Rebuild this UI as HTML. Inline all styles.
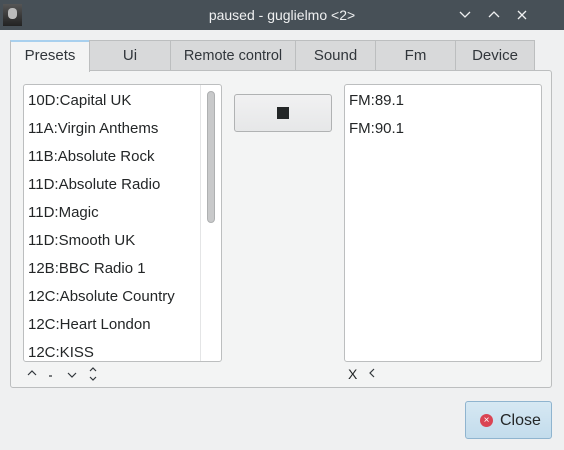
<!DOCTYPE html><html><head><style>
body{margin:0;width:564px;height:450px;background:#eff0f1;font-family:"Liberation Sans","DejaVu Sans",sans-serif;font-size:14px;color:#232627;position:relative;overflow:hidden}
.a{position:absolute}
.tb{left:0;top:0;width:564px;height:30px;background:#475057;color:#eff0f1;font-size:14px}
.tab{top:40px;height:30px;background:#d8d9da;border:1px solid #bcbebf;border-bottom:none;box-sizing:border-box;text-align:center;line-height:30px;font-size:15px;color:#31363b}
.list{background:#fff;border:1px solid #bcbebf;border-radius:3px;box-sizing:border-box}
.row{position:absolute;left:4px;font-size:15px}
</style></head><body>
<div class="a tb">
<div class="a" style="left:3px;top:4px;width:19px;height:22px;background:linear-gradient(#555,#222)"><div class="a" style="left:5px;top:4px;width:9px;height:11px;border-radius:4px;background:#bbb"></div></div>
<div class="a" style="left:0;width:564px;top:7px;text-align:center">paused - guglielmo &lt;2&gt;</div>
<svg class="a" style="left:455px;top:8px" width="100" height="14" fill="none" stroke="#eff0f1" stroke-width="1.3"><path d="M5 4l5 5 5-5M34 9l5-5 5 5M63 3l8 8M71 3l-8 8"/></svg>
</div>
<div class="a" style="left:10px;top:70px;width:542px;height:318px;background:#f3f4f4;border:1px solid #bcbebf;border-radius:3px;box-sizing:border-box"></div>
<div class="a tab" style="left:10px;width:80px;background:#f3f4f4;border-top:2px solid #a8d0ee;height:32px;line-height:28px">Presets</div>
<div class="a tab" style="left:89px;width:82px">Ui</div>
<div class="a tab" style="left:170px;width:126px;font-size:14.5px">Remote control</div>
<div class="a tab" style="left:295px;width:81px">Sound</div>
<div class="a tab" style="left:375px;width:81px">Fm</div>
<div class="a tab" style="left:455px;width:80px">Device</div>
<div class="a list" style="left:23px;top:84px;width:199px;height:278px;overflow:hidden">
<div class="a" style="left:176px;top:0;width:1px;height:278px;background:#e4e5e6"></div>
<div class="a" style="left:183px;top:6px;width:8px;height:132px;border-radius:4px;background:#c8c9ca;border:1px solid #aeb0b1;box-sizing:border-box"></div>
<div class="row" style="top:7px">10D:Capital UK</div>
<div class="row" style="top:35px">11A:Virgin Anthems</div>
<div class="row" style="top:63px">11B:Absolute Rock</div>
<div class="row" style="top:91px">11D:Absolute Radio</div>
<div class="row" style="top:119px">11D:Magic</div>
<div class="row" style="top:147px">11D:Smooth UK</div>
<div class="row" style="top:175px">12B:BBC Radio 1</div>
<div class="row" style="top:203px">12C:Absolute Country</div>
<div class="row" style="top:231px">12C:Heart London</div>
<div class="row" style="top:259px">12C:KISS</div>
</div>
<svg class="a" style="left:24px;top:366px" width="80" height="16" fill="none" stroke="#31363b" stroke-width="1.2"><path d="M4 9l4-4 4 4M25 10h3M44 7l4 4 4-4M66 5l3-3 3 3M66 11l3 3 3-3"/></svg>
<div class="a" style="left:234px;top:94px;width:98px;height:38px;border:1px solid #b0b2b3;border-radius:3px;box-sizing:border-box;background:linear-gradient(#f1f1f2,#e6e7e8)"><div class="a" style="left:42px;top:12px;width:12px;height:12px;background:#232627"></div></div>
<div class="a list" style="left:344px;top:84px;width:198px;height:278px">
<div class="row" style="top:7px">FM:89.1</div>
<div class="row" style="top:35px">FM:90.1</div>
</div>
<div class="a" style="left:348px;top:366px;font-size:14px">X</div>
<svg class="a" style="left:366px;top:366px" width="12" height="14" fill="none" stroke="#31363b" stroke-width="1.2"><path d="M8 3l-4 4 4 4"/></svg>
<div class="a" style="left:465px;top:401px;width:87px;height:38px;border:1px solid #8fb4cf;border-radius:3px;box-sizing:border-box;background:linear-gradient(#d6e8f3,#c3dcec)">
<div class="a" style="left:14px;top:12px;width:13px;height:13px;border-radius:50%;background:#da4453;color:#fff;font-size:10px;line-height:13px;text-align:center">×</div>
<div class="a" style="left:34px;top:10px;font-size:16px">Close</div>
</div>
</body></html>
